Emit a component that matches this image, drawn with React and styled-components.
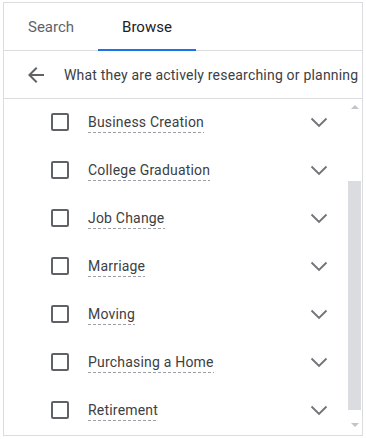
import React from "react";
import styled, { createGlobalStyle } from "styled-components";

const Global = createGlobalStyle`
  html, body { margin: 0; padding: 0; background: #fff; }
  body { font-family: Roboto, "Liberation Sans", Arial, sans-serif; }
  * { box-sizing: border-box; }
`;

const Panel = styled.div`
  margin: 2px 0 0 3px;
  width: 360px;
  height: 434px;
  border: 1px solid #dadce0;
  display: flex;
  flex-direction: column;
  overflow: hidden;
`;

const TabBar = styled.div`
  display: flex;
  height: 48px;
  flex: none;
  border-bottom: 1px solid #dadce0;
`;

const Tab = styled.div`
  position: relative;
  padding: 1px 24px 0;
  display: flex;
  align-items: center;
  font-size: 15px;
  letter-spacing: 0;
  color: ${(p) => (p.$active ? "#202124" : "#5f6368")};
  &::after {
    content: "";
    display: ${(p) => (p.$active ? "block" : "none")};
    position: absolute;
    left: 0;
    right: 0;
    bottom: -1px;
    height: 2px;
    background: #1a73e8;
  }
`;

const Crumb = styled.div`
  display: flex;
  align-items: center;
  height: 48px;
  flex: none;
  border-bottom: 1px solid #dadce0;
  padding-left: 20px;
  gap: 16px;
  white-space: nowrap;
  font-size: 14px;
  letter-spacing: 0.2px;
  color: #3c4043;
`;

const IconBox = styled.span`
  width: 24px;
  height: 24px;
  display: inline-flex;
  align-items: center;
  justify-content: center;
  flex: none;
  color: #5f6368;
`;

const Body = styled.div`
  flex: 1;
  display: flex;
  min-height: 0;
`;

const List = styled.div`
  flex: 1;
  display: flex;
  flex-direction: column;
  margin-top: -1px;
`;

const Row = styled.div`
  height: 48px;
  flex: none;
  display: flex;
  align-items: center;
  padding-left: 47px;
  padding-right: 16px;
`;

const Check = styled.span`
  width: 18px;
  height: 18px;
  border: 2px solid #5f6368;
  border-radius: 2px;
  flex: none;
`;

const Label = styled.span`
  margin-left: 19px;
  font-size: 14px;
  color: #3c4043;
  letter-spacing: 0.2px;
  padding-bottom: 3px;
  background-image: repeating-linear-gradient(
    to right,
    #9aa0a6 0 3px,
    transparent 3px 5px
  );
  background-size: 100% 1px;
  background-repeat: no-repeat;
  background-position: left bottom;
  margin-top: 2px;
`;

const Spacer = styled.span`
  flex: 1;
`;

const ScrollTrack = styled.div`
  width: 15px;
  flex: none;
  display: flex;
  flex-direction: column;
  align-items: center;
  padding: 6px 1px 8px 1px;
`;

const Arrow = styled.span`
  width: 0;
  height: 0;
  border-left: 4px solid transparent;
  border-right: 4px solid transparent;
  ${(p) =>
    p.$down
      ? "border-top: 4px solid #c4c4c4;"
      : "border-bottom: 4px solid #c4c4c4;"}
  flex: none;
`;

const Thumb = styled.div`
  width: 13px;
  height: 229px;
  background: #dadce0;
  margin-top: 72px;
  flex: none;
`;

const Gap = styled.div`
  flex: 1;
`;

const items = [
  "Business Creation",
  "College Graduation",
  "Job Change",
  "Marriage",
  "Moving",
  "Purchasing a Home",
  "Retirement",
];

const Chevron = () => (
  <IconBox>
    <svg width="24" height="24" viewBox="0 0 24 24" fill="none">
      <polyline
        points="4.5,8.5 12,16 19.5,8.5"
        stroke="#70757a"
        strokeWidth="1.9"
        strokeLinecap="butt"
        strokeLinejoin="miter"
      />
    </svg>
  </IconBox>
);

export default function App() {
  return (
    <>
      <Global />
      <Panel>
        <TabBar>
          <Tab>Search</Tab>
          <Tab $active>Browse</Tab>
        </TabBar>
        <Crumb>
          <IconBox>
            <svg width="24" height="24" viewBox="0 0 24 24" fill="#5f6368">
              <path d="M20 11H7.83l5.59-5.59L12 4l-8 8 8 8 1.41-1.41L7.83 13H20v-2z" />
            </svg>
          </IconBox>
          <span>What they are actively researching or planning</span>
        </Crumb>
        <Body>
          <List>
            {items.map((t) => (
              <Row key={t}>
                <Check />
                <Label>{t}</Label>
                <Spacer />
                <Chevron />
              </Row>
            ))}
          </List>
          <ScrollTrack>
            <Arrow />
            <Thumb />
            <Gap />
            <Arrow $down />
          </ScrollTrack>
        </Body>
      </Panel>
    </>
  );
}
